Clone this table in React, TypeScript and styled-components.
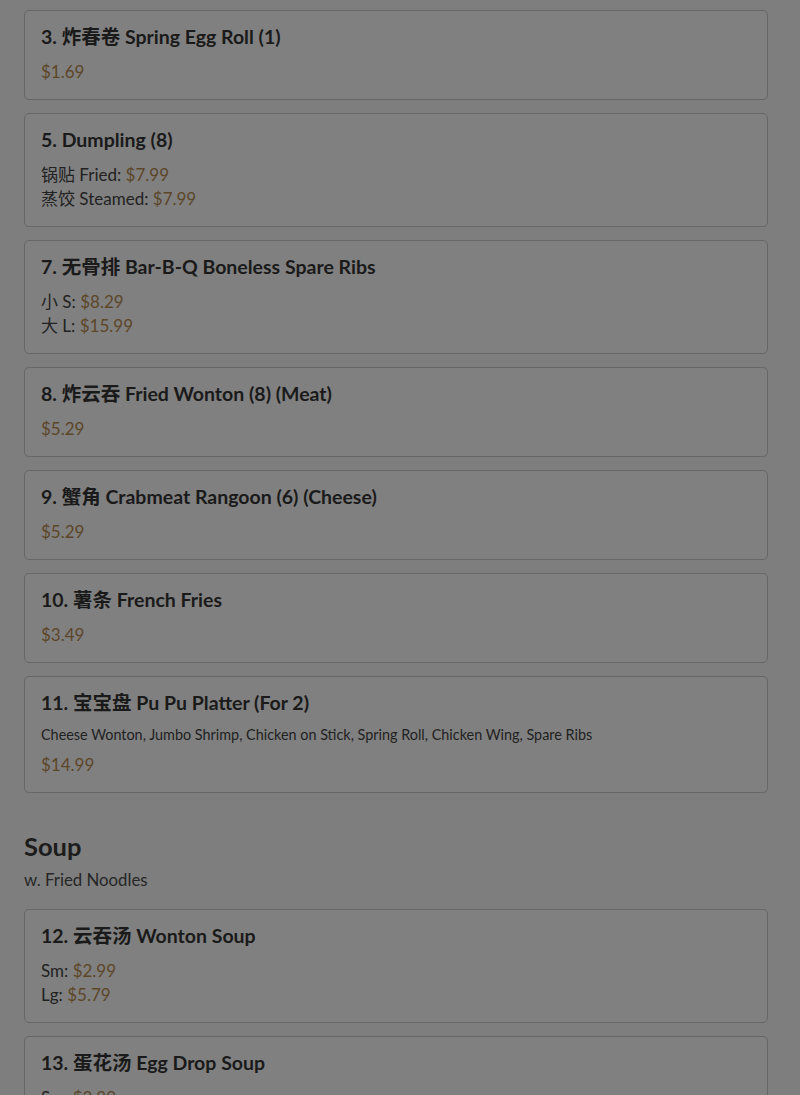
import React from "react";
import styled, { createGlobalStyle } from "styled-components";

const Global = createGlobalStyle`
  html, body { margin: 0; padding: 0; background: #7e7e7e; }
  body { font-family: "Lato", "Noto Sans CJK SC", sans-serif; color: #1c1c1c; }
`;

const Page = styled.main`
  padding: 10px 32px 0 24px;
  display: flex;
  flex-direction: column;
`;

const Section = styled.section`
  display: flex;
  flex-direction: column;
  gap: 13px;
  margin-bottom: 40px;
`;

const SectionHead = styled.header`
  display: flex;
  flex-direction: column;
  gap: 10px;
  margin-bottom: 5px;
`;

const SectionTitle = styled.h2`
  margin: 0;
  font-size: 25.5px;
  line-height: 26px;
  font-weight: 700;
  color: #1c1c1c;
`;

const SectionNote = styled.p`
  margin: 0;
  font-size: 16.8px;
  line-height: 22px;
  color: #262626;
`;

const Card = styled.article`
  border: 1px solid #676767;
  border-radius: 5px;
  background: #808080;
  padding: 15px 16px 16px;
  display: flex;
  flex-direction: column;
`;

const Title = styled.h3`
  margin: 0 0 11px;
  font-size: 19.5px;
  line-height: 22px;
  font-weight: 700;
  color: #1a1a1a;
`;

const Desc = styled.p`
  margin: 0 0 7px;
  font-size: 14.4px;
  line-height: 20px;
  color: #222;
`;

const Line = styled.div`
  font-size: 17px;
  line-height: 24px;
  padding-top: 1px;
  margin-bottom: -1px;
  color: #222;
`;

const Price = styled.span`
  color: #5c4628;
`;

type Opt = { label?: string; price: string };
type Item = { title: string; desc?: string; opts: Opt[] };

const appetizers: Item[] = [
  { title: "3. 炸春卷 Spring Egg Roll (1)", opts: [{ price: "$1.69" }] },
  {
    title: "5. Dumpling (8)",
    opts: [
      { label: "锅贴 Fried: ", price: "$7.99" },
      { label: "蒸饺 Steamed: ", price: "$7.99" },
    ],
  },
  {
    title: "7. 无骨排 Bar-B-Q Boneless Spare Ribs",
    opts: [
      { label: "小 S: ", price: "$8.29" },
      { label: "大 L: ", price: "$15.99" },
    ],
  },
  { title: "8. 炸云吞 Fried Wonton (8) (Meat)", opts: [{ price: "$5.29" }] },
  { title: "9. 蟹角 Crabmeat Rangoon (6) (Cheese)", opts: [{ price: "$5.29" }] },
  { title: "10. 薯条 French Fries", opts: [{ price: "$3.49" }] },
  {
    title: "11. 宝宝盘 Pu Pu Platter (For 2)",
    desc: "Cheese Wonton, Jumbo Shrimp, Chicken on Stick, Spring Roll, Chicken Wing, Spare Ribs",
    opts: [{ price: "$14.99" }],
  },
];

const soups: Item[] = [
  {
    title: "12. 云吞汤 Wonton Soup",
    opts: [
      { label: "Sm: ", price: "$2.99" },
      { label: "Lg: ", price: "$5.79" },
    ],
  },
  {
    title: "13. 蛋花汤 Egg Drop Soup",
    opts: [
      { label: "Sm: ", price: "$2.99" },
      { label: "Lg: ", price: "$5.79" },
    ],
  },
];

const MenuCard = ({ item }: { item: Item }) => (
  <Card>
    <Title>{item.title}</Title>
    {item.desc && <Desc>{item.desc}</Desc>}
    {item.opts.map((o, i) => (
      <Line key={i}>
        {o.label}
        <Price>{o.price}</Price>
      </Line>
    ))}
  </Card>
);

export default function App() {
  return (
    <>
      <Global />
      <Page>
        <Section>
          {appetizers.map((it) => (
            <MenuCard key={it.title} item={it} />
          ))}
        </Section>
        <Section>
          <SectionHead>
            <SectionTitle>Soup</SectionTitle>
            <SectionNote>w. Fried Noodles</SectionNote>
          </SectionHead>
          {soups.map((it) => (
            <MenuCard key={it.title} item={it} />
          ))}
        </Section>
      </Page>
    </>
  );
}
